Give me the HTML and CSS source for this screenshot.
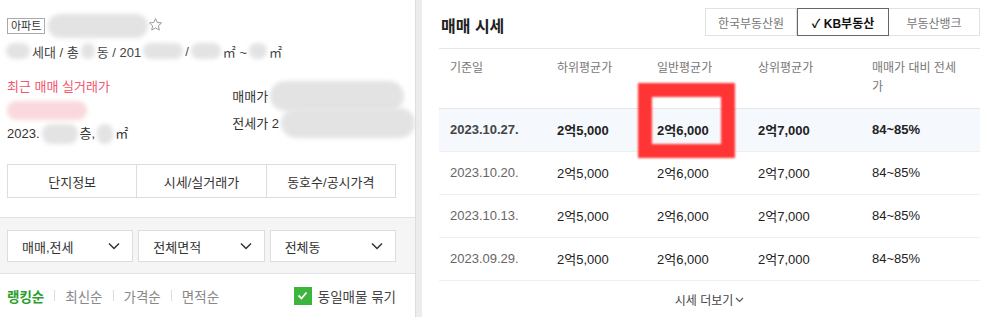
FILE: index.html
```html
<!DOCTYPE html>
<html lang="ko">
  <head>
    <meta charset="UTF-8">
    <title>단지 시세</title>
    <link rel="stylesheet" href="styles.css">
  </head>
  <body>
    <div id="page">
      <div id="left">
        <div class="title-row">
          <span class="badge">아파트</span>
          <span class="blur name"></span>
          <svg class="star" width="15" height="15" viewBox="0 0 24 24"><path d="M12 2.5l2.9 6.3 6.8.7-5.1 4.6 1.5 6.8L12 17.4l-6.1 3.5 1.5-6.8-5.1-4.6 6.8-.7z" fill="none" stroke="#999" stroke-width="1.6" stroke-linejoin="round"/></svg>
        </div>
        <div class="spec">
          <span class="blur" style="width:24px"></span>세대 / 총<span class="blur" style="width:14px"></span>동 / 201<span class="blur" style="width:40px"></span>/<span class="blur" style="width:30px"></span>㎡ ~<span class="blur" style="width:18px"></span>㎡
        </div>
        <div class="recent">
          <div class="recent-deal">
            <div class="recent-label">최근 매매 실거래가</div>
            <span class="blur pink"></span>
            <div class="recent-date">2023.<span class="blur" style="width:36px"></span>층,<span class="blur" style="width:16px"></span>㎡</div>
          </div>
          <div class="recent-price">
            <div class="price-row">매매가 <span class="blur wide"></span></div>
            <div class="price-row">전세가 2<span class="blur wide"></span></div>
          </div>
        </div>
        <div class="menu">
          <div>단지정보</div>
          <div>시세/실거래가</div>
          <div>동호수/공시가격</div>
        </div>
        <div class="filters">
          <div class="select">매매,전세<svg width="12" height="8" viewBox="0 0 12 8"><path d="M1 1.5l5 5 5-5" fill="none" stroke="#333" stroke-width="1.5"/></svg></div>
          <div class="select">전체면적<svg width="12" height="8" viewBox="0 0 12 8"><path d="M1 1.5l5 5 5-5" fill="none" stroke="#333" stroke-width="1.5"/></svg></div>
          <div class="select">전체동<svg width="12" height="8" viewBox="0 0 12 8"><path d="M1 1.5l5 5 5-5" fill="none" stroke="#333" stroke-width="1.5"/></svg></div>
        </div>
        <div class="sort">
          <span class="on">랭킹순</span><i></i><span>최신순</span><i></i><span>가격순</span><i></i><span>면적순</span>
          <label class="check"><span class="box"><svg width="11" height="9" viewBox="0 0 11 9"><path d="M1.5 4.5l3 3 5-6" fill="none" stroke="#fff" stroke-width="1.8"/></svg></span>동일매물 묶기</label>
        </div>
      </div>
      <div id="divider"></div>
      <div id="right">
        <div class="mk-head">
          <h2>매매 시세</h2>
          <div class="providers">
            <span>한국부동산원</span>
            <span class="on">✓ KB부동산</span>
            <span>부동산뱅크</span>
          </div>
        </div>
        <table class="prices">
          <colgroup><col style="width:107px"><col style="width:100px"><col style="width:101px"><col style="width:114px"><col></colgroup>
          <thead>
            <tr><th>기준일</th><th>하위평균가</th><th>일반평균가</th><th>상위평균가</th><th><span class="wrap">매매가 대비 전세가</span></th></tr>
          </thead>
          <tbody>
            <tr class="latest"><td class="date">2023.10.27.</td><td>2억5,000</td><td>2억6,000</td><td>2억7,000</td><td>84~85%</td></tr>
            <tr><td class="date">2023.10.20.</td><td>2억5,000</td><td>2억6,000</td><td>2억7,000</td><td>84~85%</td></tr>
            <tr><td class="date">2023.10.13.</td><td>2억5,000</td><td>2억6,000</td><td>2억7,000</td><td>84~85%</td></tr>
            <tr><td class="date">2023.09.29.</td><td>2억5,000</td><td>2억6,000</td><td>2억7,000</td><td>84~85%</td></tr>
          </tbody>
        </table>
        <div class="more">시세 더보기<svg width="9" height="6" viewBox="0 0 9 6"><path d="M1 1l3.5 3.5L8 1" fill="none" stroke="#555" stroke-width="1.2"/></svg></div>
        <div class="mark"></div>
      </div>
    </div>
  </body>
</html>
```

FILE: styles.css
```css
html, body {
  margin: 0;
  padding: 0;
  background: #fff;
  font-family: "Liberation Sans", "Noto Sans CJK KR", sans-serif;
  color: #333;
  font-size: 13px;
}

#page {
  display: flex;
  width: 992px;
  height: 317px;
  overflow: hidden;
}

/* left panel */
#left {
  width: 415px;
  flex: none;
}

#divider {
  width: 6px;
  flex: none;
  background: #ececec;
  border-left: 1px solid #ddd;
}

.blur {
  display: inline-block;
  height: 17px;
  background: #e3e3e3;
  border-radius: 9px;
  filter: blur(2px);
  vertical-align: middle;
}

.title-row {
  display: flex;
  align-items: center;
  gap: 3px;
  height: 24px;
  margin-top: 14px;
  padding-left: 7px;
}

.badge {
  border: 1px solid #aaa;
  font-size: 11px;
  line-height: 14px;
  padding: 0 3px;
  color: #333;
}

.blur.name {
  width: 100px;
  height: 24px;
  border-radius: 12px;
}

.star {
  margin-left: -3px;
  margin-top: -4px;
}

.spec {
  display: flex;
  align-items: center;
  height: 18px;
  margin-top: 4px;
  padding-left: 4px;
  color: #444;
  white-space: nowrap;
}

.spec .blur {
  height: 16px;
  margin: 0 2px;
}

.recent {
  display: flex;
  margin-top: 16px;
  padding-left: 7px;
}

.recent-deal {
  width: 231px;
}

.recent-label {
  color: #f2566b;
  line-height: 18px;
  margin-top: 2px;
}

.blur.pink {
  display: block;
  width: 80px;
  height: 19px;
  margin-top: 5px;
  background: #f9d9dd;
}

.recent-date {
  display: flex;
  align-items: center;
  margin-top: 4px;
  line-height: 18px;
}

.recent-date .blur {
  height: 20px;
  margin: 0 2px;
}

.recent-price {
  flex: 1;
  padding-top: 6px;
}

.price-row {
  display: flex;
  align-items: center;
  height: 27px;
  white-space: nowrap;
}

.blur.wide {
  width: 134px;
  height: 30px;
  border-radius: 15px;
  margin-left: 2px;
}

.menu {
  display: flex;
  margin: 20px 19px 0 7px;
  border: 1px solid #ddd;
  height: 32px;
}

.menu div {
  flex: 1;
  display: flex;
  justify-content: center;
  align-items: center;
  border-left: 1px solid #ddd;
}

.menu div:first-child {
  border-left: none;
}

.filters {
  display: flex;
  gap: 5px;
  margin-top: 19px;
  padding: 12px 19px 11px 7px;
  background: #f5f5f5;
  border-top: 1px solid #e2e2e2;
  border-bottom: 1px solid #e2e2e2;
}

.select {
  flex: 1;
  display: flex;
  justify-content: space-between;
  align-items: center;
  height: 30px;
  padding: 0 12px 0 14px;
  background: #fff;
  border: 1px solid #ddd;
}

.sort {
  display: flex;
  align-items: center;
  height: 43px;
  padding: 0 19px 0 7px;
  font-size: 13.5px;
  color: #888;
}

.sort .on {
  color: #2aa02a;
  font-weight: bold;
}

.sort i {
  width: 1px;
  height: 11px;
  background: #ddd;
  margin: 0 10px;
}

.check {
  margin-left: auto;
  display: flex;
  align-items: center;
  color: #444;
  gap: 6px;
}

.check .box {
  width: 18px;
  height: 18px;
  background: #3bb53b;
  display: flex;
  justify-content: center;
  align-items: center;
}

/* right panel */
#right {
  position: relative;
  flex: 1;
  padding: 0 12px 0 17px;
}

.mk-head {
  display: flex;
  justify-content: space-between;
  height: 48px;
  border-bottom: 1px solid #e6e6e6;
}

.mk-head h2 {
  margin: 17px 0 0 2px;
  font-size: 16px;
  line-height: 20px;
  color: #222;
}

.providers {
  display: flex;
  margin-top: 8px;
  height: 28px;
}

.providers span {
  display: flex;
  align-items: center;
  justify-content: center;
  width: 90px;
  font-size: 12px;
  color: #777;
  border: 1px solid #e2e2e2;
}

.providers span + span {
  border-left: none;
}

.providers .on {
  border: 1px solid #666;
  color: #111;
  font-weight: bold;
}

.prices {
  width: 100%;
  border-collapse: collapse;
  table-layout: fixed;
}

.prices th {
  height: 59px;
  padding: 10px 0 0 11px;
  text-align: left;
  vertical-align: top;
  font-weight: normal;
  font-size: 12px;
  line-height: 19px;
  color: #777;
  border-bottom: 1px solid #e6e6e6;
  box-sizing: border-box;
}

.prices th .wrap {
  display: block;
  width: 86px;
}

.prices td {
  height: 42px;
  padding: 0 0 0 11px;
  color: #222;
  border-bottom: 1px solid #efefef;
}

.prices td.date {
  color: #666;
}

.prices .latest td {
  background: #f5f8fd;
  font-weight: bold;
}

.prices .latest td.date {
  color: #444;
}

.more {
  display: flex;
  align-items: center;
  justify-content: center;
  gap: 2px;
  height: 38px;
  font-size: 12px;
  color: #444;
}

.mark {
  position: absolute;
  left: 216px;
  top: 83px;
  width: 69px;
  height: 47px;
  border: 14px solid #ff3535;
  filter: blur(1px);
}
```
